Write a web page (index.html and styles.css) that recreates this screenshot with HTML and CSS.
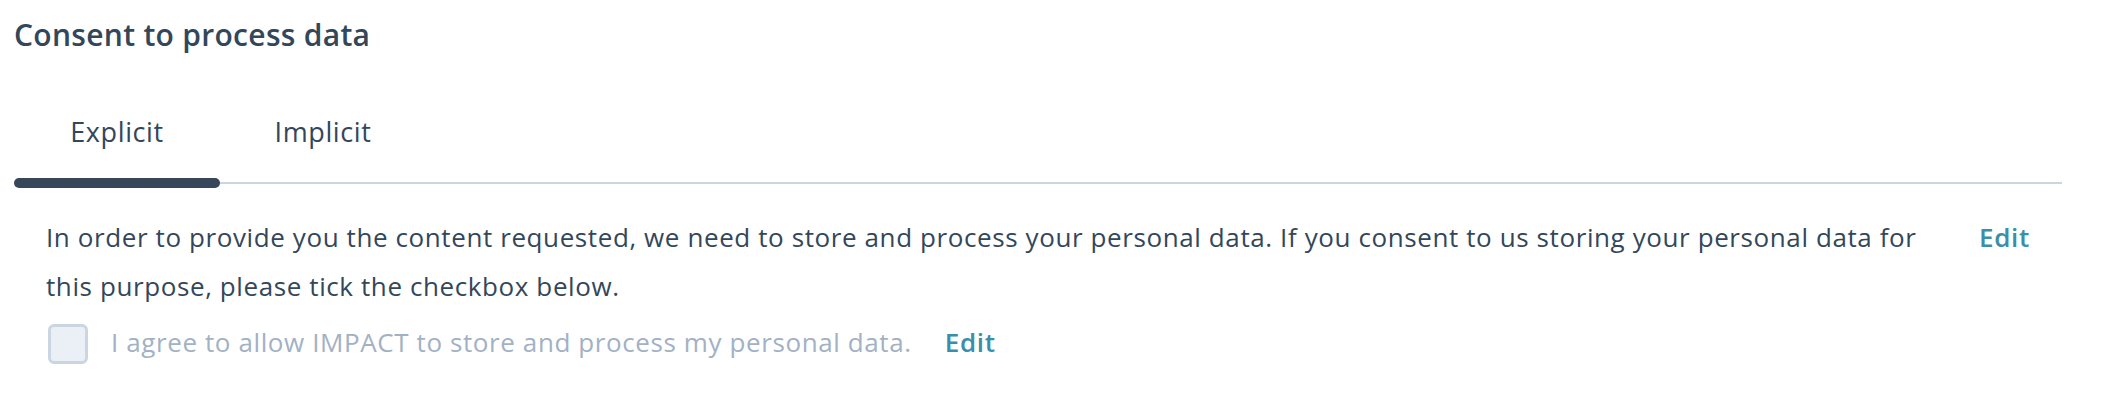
FILE: index.html
```html
<!DOCTYPE html>
<html lang="en">
<head>
<meta charset="utf-8">
<title>Consent to process data</title>
<link rel="stylesheet" href="styles.css">
</head>
<body>
<div class="panel">
  <h2 class="title">Consent to process data</h2>
  <div class="tabs">
    <div class="tab tab-active">Explicit</div>
    <div class="tab">Implicit</div>
  </div>
  <div class="content">
    <div class="text-row">
      <p class="text">In order to provide you the content requested, we need to store and process your personal data. If you consent to us storing your personal data for this purpose, please tick the checkbox below.</p>
      <a class="edit" href="#">Edit</a>
    </div>
    <div class="check-row">
      <span class="checkbox"></span>
      <span class="check-label">I agree to allow IMPACT to store and process my personal data.</span>
      <a class="edit edit-inline" href="#">Edit</a>
    </div>
  </div>
</div>
</body>
</html>
```

FILE: styles.css
```css
html, body {
  margin: 0;
  padding: 0;
  background: #ffffff;
}

body {
  font-family: "Open Sans", "Noto Sans", sans-serif;
  color: #33475b;
}

.panel {
  width: 2048px;
  margin-left: 14px;
}

.title {
  margin: 15px 0 0 0;
  font-size: 30px;
  line-height: 40px;
  font-weight: 600;
  letter-spacing: 0.3px;
  color: #33475b;
}

.tabs {
  display: flex;
  margin-top: 57px;
  border-bottom: 2px solid #cbd6e2;
}

.tab {
  position: relative;
  width: 206px;
  text-align: center;
  font-size: 27px;
  line-height: 40px;
  letter-spacing: 0.6px;
  padding-bottom: 30px;
  color: #33475b;
}

.tab-active::after {
  content: "";
  position: absolute;
  left: 0;
  right: 0;
  bottom: -6px;
  height: 10px;
  border-radius: 5px;
  background: #374759;
}

.content {
  padding: 29px 32px 0 32px;
}

.text-row {
  display: flex;
  align-items: flex-start;
}

.text {
  flex: 1;
  margin: 0 40px 0 0;
  font-size: 26px;
  line-height: 49px;
  letter-spacing: 0.6px;
}

.edit {
  font-size: 26px;
  line-height: 49px;
  font-weight: 600;
  letter-spacing: 0.7px;
  color: #3b8eaa;
  text-decoration: none;
}

.check-row {
  display: flex;
  align-items: flex-start;
  margin-top: 13px;
}

.checkbox {
  width: 34px;
  height: 34px;
  border: 3px solid #cbd6e2;
  border-radius: 6px;
  background: #eaf0f6;
  margin-left: 2px;
  margin-right: 23px;
}

.check-label {
  font-size: 26px;
  line-height: 36px;
  letter-spacing: 0.6px;
  color: #a2b1c4;
  margin-right: 33px;
}

.edit-inline {
  line-height: 36px;
}
```
